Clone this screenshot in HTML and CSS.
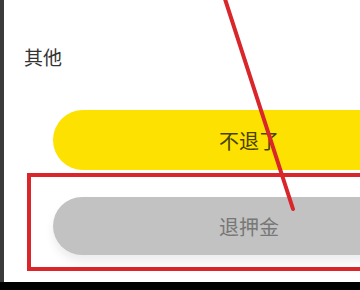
FILE: index.html
```html
<!DOCTYPE html>
<html lang="zh">

<head>
  <meta charset="UTF-8">
  <meta name="viewport" content="width=device-width, initial-scale=1.0">
  <title>退押金</title>
  <link rel="stylesheet" href="styles.css">
</head>

<body>
  <div class="screen">
    <div class="edge"></div>
    <div class="page">
      <p class="label">其他</p>
      <button type="button" class="btn btn-stay">不退了</button>
      <div class="highlight">
        <button type="button" class="btn btn-refund">退押金</button>
      </div>
    </div>

    <!-- annotation arrow drawn over the screenshot -->
    <svg class="mark" width="360" height="282" viewBox="0 0 360 282">
      <line x1="224" y1="-4" x2="293" y2="209" stroke="#d8262b" stroke-width="4" stroke-linecap="round" />
    </svg>
  </div>
  <div class="bottom-bar"></div>
</body>

</html>
```

FILE: styles.css
```css
body {
  margin: 0;
  padding: 0;
  width: 360px;
  height: 290px;
  overflow: hidden;
  background-color: #000;
  font-family: "Noto Sans CJK SC", "Noto Sans", sans-serif;
}

.screen {
  position: relative;
  display: flex;
  height: 282px;
}

.edge {
  width: 4px;
  background-color: #3b3b3b;
}

.page {
  flex: 1;
  background-color: #fff;
  overflow: hidden;
}

.label {
  margin: 0;
  padding: 45px 0 0 20px;
  font-size: 19px;
  line-height: 24px;
  color: #333;
}

.btn {
  display: block;
  width: 392px;
  border: none;
  font-family: inherit;
  font-size: 20px;
  padding: 0;
}

.btn-stay {
  margin: 41px 0 0 49px;
  height: 60px;
  border-radius: 30px;
  background-color: #fde100;
  color: #4a4200;
}

.highlight {
  margin: 3px 0 0 23px;
  width: 480px;
  border: 4px solid #d8262b;
  padding: 20px 0 12px 22px;
}

.btn-refund {
  height: 58px;
  border-radius: 29px;
  background-color: #c2c2c2;
  color: #777;
  box-shadow: 0 6px 10px rgba(0, 0, 0, 0.08);
}

.mark {
  position: absolute;
  top: 0;
  left: 0;
  pointer-events: none;
}

.bottom-bar {
  height: 8px;
  background-color: #000;
}
```
